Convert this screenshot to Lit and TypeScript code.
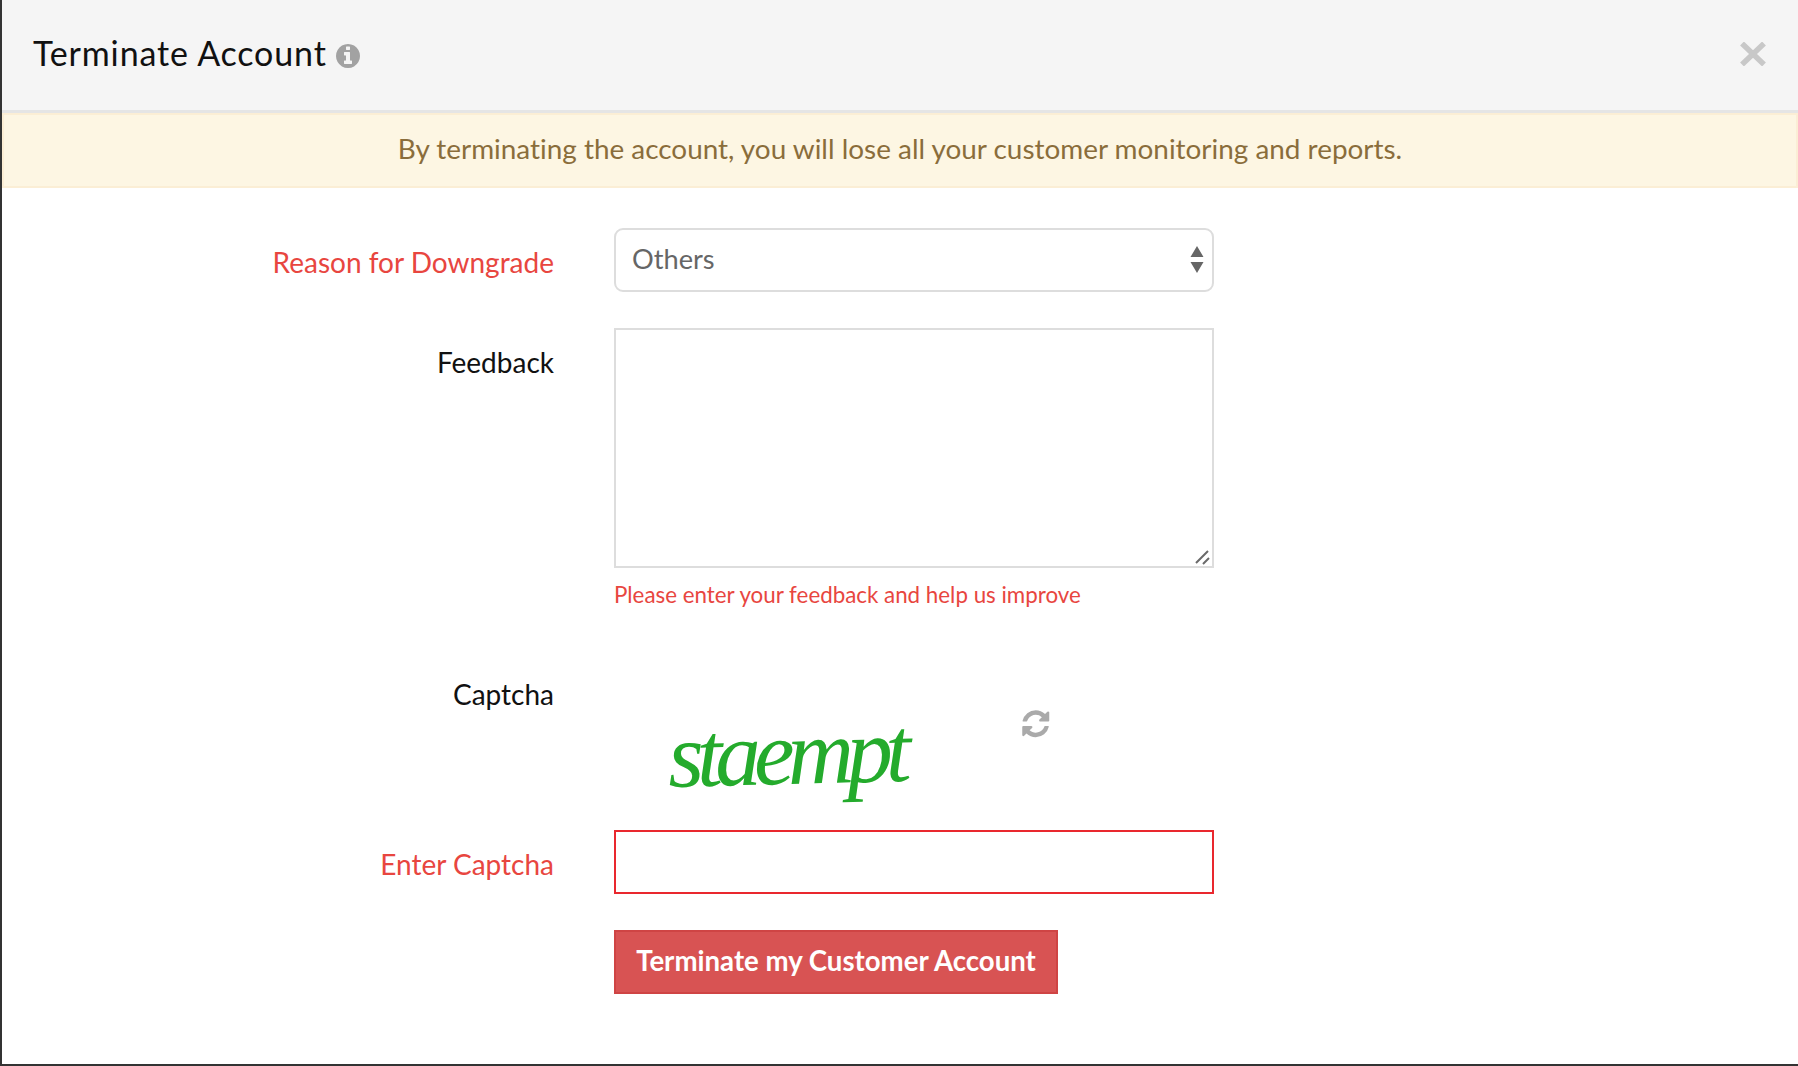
import { LitElement, html, css } from "lit";
import { customElement } from "lit/decorators.js";

@customElement("app-root")
export class AppRoot extends LitElement {
  static styles = css`
    :host {
      display: block;
      height: 1066px;
      box-sizing: border-box;
      background: #333;
      padding: 0 0 2px 2px;
      font-family: "Lato", "Liberation Sans", sans-serif;
      font-variant-ligatures: none;
    }
    .modal { height: 100%; background: #fff; display: flex; flex-direction: column; }
    .header {
      box-sizing: border-box; height: 113px; flex: none;
      background: #f5f5f5; border-bottom: 3px solid #e5e5e5;
      display: flex; align-items: center; padding: 0 32px 0 31px;
    }
    h1 { margin: 0 0 4px; font-size: 34px; font-weight: 400; color: #111; line-height: 40px; letter-spacing: 0.85px; }
    .info { width: 28px; height: 28px; margin-left: 7px; margin-top: 1px; fill: #a2a2a2; flex: none; }
    .close { width: 26px; height: 24px; margin-left: auto; margin-top: -2px; flex: none; stroke: #c8c8c8; stroke-width: 5.5; }
    .banner {
      box-sizing: border-box; height: 75px; flex: none;
      background: #fdf6e3; border: 2px solid #fbeed5;
      color: #8a6d3b; font-size: 27.9px; text-align: center; line-height: 67px;
    }
    .form { padding-top: 40px; }
    .row { display: flex; gap: 60px; align-items: flex-start; }
    .label {
      box-sizing: border-box; width: 552px; flex: none; text-align: right;
      font-size: 28px; line-height: 30px; padding-top: 19px; color: #111;
    }
    .label.err { color: #e8463f; }
    .label.flush { padding-top: 0; }
    .field { width: 600px; flex: none; }
    .select {
      box-sizing: border-box; height: 64px; border: 2px solid #ddd; border-radius: 9px;
      display: flex; align-items: center; justify-content: space-between;
      padding: 0 8px 4px 16px; font-size: 27.2px; color: #666;
    }
    .arrows { width: 14px; height: 28px; fill: #666; margin-top: 4px; }
    .area { position: relative; height: 240px; }
    textarea {
      display: block; box-sizing: border-box; width: 100%; height: 100%;
      border: 2px solid #ddd; border-radius: 0; outline: none; resize: none; background: #fff;
    }
    .grip { position: absolute; right: 3px; bottom: 3px; width: 16px; height: 16px; stroke: #6a6a6a; stroke-width: 2; }
    .hint { margin-top: 14px; color: #e8463f; font-size: 22.35px; line-height: 26px; }
    .r2 { margin-top: 36px; }
    .r3 { margin-top: 71px; }
    .r4 { margin-top: 31px; }
    .r5 { margin-top: 36px; }
    .captcha { display: flex; align-items: flex-start; height: 120px; }
    .cimg {
      width: 406px; height: 120px; flex: none; box-sizing: border-box;
      padding-left: 54px;
      font-family: "Liberation Serif", serif; font-style: italic;
      font-size: 92px; line-height: 148px; letter-spacing: -7.2px; color: #24ab2c;
    }
    .cimg span { display: inline-block; transform: rotate(-1.5deg); }
    .refresh { width: 31.5px; height: 31.5px; margin-top: 29px; fill: #aaa; flex: none; }
    input {
      display: block; box-sizing: border-box; width: 100%; height: 64px;
      border: 2px solid #e9282e; outline: none; background: #fff; border-radius: 0;
    }
    button {
      display: block; box-sizing: border-box; width: 444px; height: 64px; padding: 0 0 4px;
      background: #d85353; border: 2px solid #cf4444; border-radius: 0;
      color: #fff; font-family: inherit; font-size: 27.6px; font-weight: 700; text-align: center;
    }
  `;

  render() {
    return html`
      <div class="modal">
        <div class="header">
          <h1>Terminate Account</h1>
          <svg class="info" viewBox="0 0 1792 1792"><path d="M1152 1376v-160q0-14-9-23t-23-9h-96v-512q0-14-9-23t-23-9h-320q-14 0-23 9t-9 23v160q0 14 9 23t23 9h96v320h-96q-14 0-23 9t-9 23v160q0 14 9 23t23 9h448q14 0 23-9t9-23zm-128-896v-160q0-14-9-23t-23-9h-192q-14 0-23 9t-9 23v160q0 14 9 23t23 9h192q14 0 23-9t9-23zm640 416q0 209-103 385.500t-279.500 279.500-385.500 103-385.500-103-279.500-279.500-103-385.500 103-385.500 279.500-279.500 385.500-103 385.500 103 279.500 279.500 103 385.500z"/></svg>
          <svg class="close" viewBox="0 0 26 24"><path d="M2 1.500L24 22.500M24 1.500L2 22.500" fill="none"/></svg>
        </div>
        <div class="banner">By terminating the account, you will lose all your customer monitoring and reports.</div>
        <div class="form">
          <div class="row">
            <div class="label err">Reason for Downgrade</div>
            <div class="field">
              <div class="select">
                <span>Others</span>
                <svg class="arrows" viewBox="0 0 14 28"><path d="M7 0L13.500 11H.5zM.5 16H13.500L7 27z"/></svg>
              </div>
            </div>
          </div>
          <div class="row r2">
            <div class="label">Feedback</div>
            <div class="field">
              <div class="area">
                <textarea></textarea>
                <svg class="grip" viewBox="0 0 16 16"><path d="M1 14L13 2M8 15L14 9" fill="none"/></svg>
              </div>
              <div class="hint">Please enter your feedback and help us improve</div>
            </div>
          </div>
          <div class="row r3">
            <div class="label flush">Captcha</div>
            <div class="field captcha">
              <div class="cimg"><span>staempt</span></div>
              <svg class="refresh" viewBox="0 0 1792 1792"><path d="M1639 1056q0 5-1 7-64 268-268 434.500t-478 166.500q-146 0-282.500-55t-243.500-157l-129 129q-19 19-45 19t-45-19-19-45v-448q0-26 19-45t45-19h448q26 0 45 19t19 45-19 45l-137 137q71 66 161 102t187 36q134 0 250-65t186-179q11-17 53-117 8-23 30-23h192q13 0 22.500 9.500t9.500 22.500zm25-800v448q0 26-19 45t-45 19h-448q-26 0-45-19t-19-45 19-45l138-138q-148-137-349-137-134 0-250 65t-186 179q-11 17-53 117-8 23-30 23h-199q-13 0-22.500-9.500t-9.500-22.500v-7q65-268 270-434.500t480-166.500q146 0 284 55.500t245 156.500l130-129q19-19 45-19t45 19 19 45z"/></svg>
            </div>
          </div>
          <div class="row r4">
            <div class="label err">Enter Captcha</div>
            <div class="field"><input type="text" /></div>
          </div>
          <div class="row r5">
            <div class="label"></div>
            <div class="field"><button>Terminate my Customer Account</button></div>
          </div>
        </div>
      </div>
    `;
  }
}
